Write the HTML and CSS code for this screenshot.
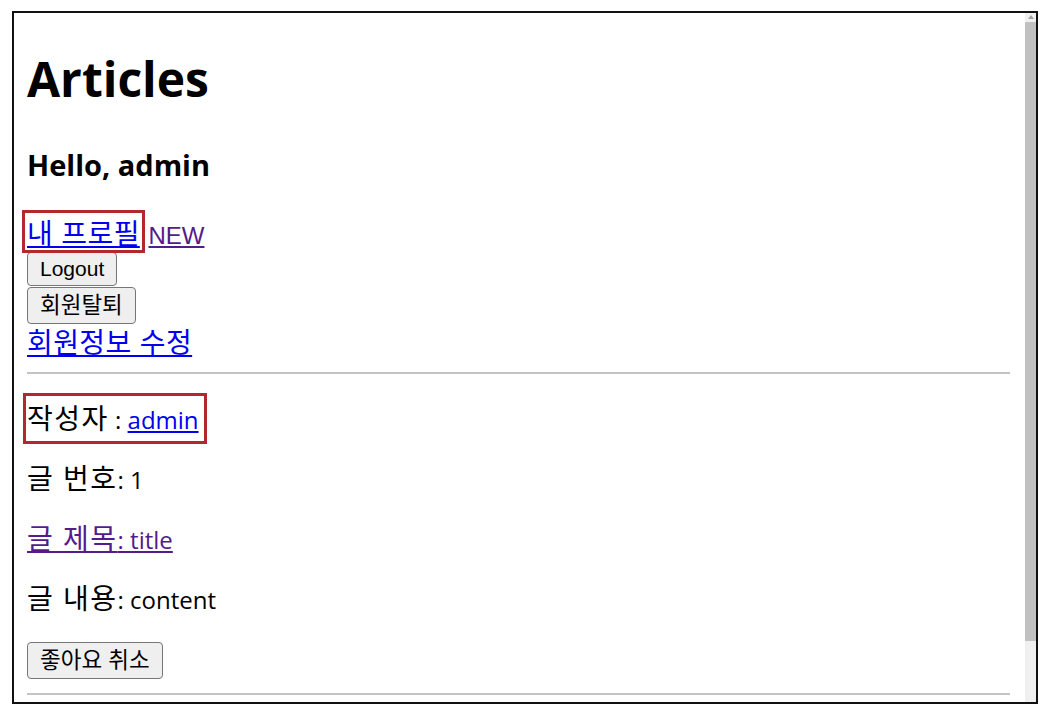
FILE: index.html
```html
<!DOCTYPE html>
<html lang="ko">
<head>
<meta charset="utf-8">
<title>Articles</title>
<link rel="stylesheet" href="styles.css">
</head>
<body>
<div class="frame">
  <div class="viewport">
    <div class="page">
      <h1 class="title">Articles</h1>
      <h3 class="greet">Hello, admin</h3>
      <div class="navline"><span class="mark mark-profile"><a class="link" href="#"><span class="ko">내 프로필</span></a></span> <a class="link visited link-new" href="#">NEW</a></div>
      <form class="form"><button type="button" class="btn btn-logout">Logout</button></form>
      <form class="form"><button type="button" class="btn btn-ko"><span class="ko">회원탈퇴</span></button></form>
      <div class="navline navline-edit"><a class="link" href="#"><span class="ko">회원정보 수정</span></a></div>
      <div class="rule rule-top"></div>
      <p class="line line-first"><span class="mark mark-author"><span class="ko">작성자</span> : <a class="link" href="#">admin</a></span></p>
      <p class="line"><span class="ko">글 번호</span>: 1</p>
      <p class="line"><a class="link visited" href="#"><span class="ko">글 제목</span>: title</a></p>
      <p class="line"><span class="ko">글 내용</span>: content</p>
      <form class="form"><button type="button" class="btn btn-ko btn-like"><span class="ko">좋아요 취소</span></button></form>
      <div class="rule rule-bottom"></div>
    </div>
  </div>
  <div class="scrollbar">
    <div class="scroll-arrow"></div>
    <div class="scroll-thumb"></div>
  </div>
</div>
</body>
</html>
```
FILE: styles.css
```css
html, body {
  margin: 0;
  padding: 0;
  background: #ffffff;
}
body {
  padding: 11px 0 0 12px;
  width: 1048px;
  height: 714px;
  box-sizing: border-box;
  overflow: hidden;
}
.frame {
  width: 1026px;
  height: 693px;
  box-sizing: border-box;
  border: 2px solid #111111;
  display: flex;
  overflow: hidden;
  background: #ffffff;
}
.viewport {
  flex: 1;
  overflow: hidden;
}
.page {
  padding: 0 15px 0 13px;
  font-family: "Open Sans", "Noto Sans CJK KR", sans-serif;
  font-size: 24px;
  color: #000000;
}
.ko {
  line-height: 16px;
}
.title {
  margin: 36px 0 0;
  font-size: 48px;
  line-height: 60px;
  font-weight: 700;
}
.greet {
  margin: 38px 0 0;
  font-size: 29px;
  line-height: 36px;
  font-weight: 700;
}
.navline {
  margin-top: 38px;
  font-family: "Liberation Sans", "Noto Sans CJK KR", sans-serif;
  font-size: 24px;
  line-height: 30px;
  height: 30px;
}
.navline .ko {
  font-size: 28px;
  letter-spacing: 0.4px;
}
.link-new {
  margin-left: 2px;
}
.navline-edit {
  margin-top: 6px;
}
.line .ko {
  font-size: 28px;
  letter-spacing: 1.5px;
}
.link {
  color: #0000ee;
  text-decoration: underline;
}
.link.visited {
  color: #551a8b;
}
.mark {
  position: relative;
}
.mark::after {
  content: "";
  position: absolute;
  border: 3px solid #b2282e;
  pointer-events: none;
}
.mark-profile::after {
  left: -5px;
  right: -5px;
  top: -12px;
  bottom: -4px;
}
.mark-author::after {
  left: -4px;
  right: -8px;
  top: -10px;
  bottom: -8px;
}
.form {
  margin: 0;
}
.btn {
  display: block;
  box-sizing: border-box;
  margin: 0;
  font-family: "Liberation Sans", "Noto Sans CJK KR", sans-serif;
  font-size: 21px;
  color: #000000;
  background: #efefef;
  border: 1.5px solid #767676;
  border-radius: 4px;
  padding: 0 12px;
}
.btn .ko {
  font-size: 22.5px;
}
.btn-logout {
  height: 34px;
  line-height: 30px;
  margin-top: 1px;
}
.btn-ko {
  height: 37px;
  line-height: 33px;
  margin-top: 1px;
}
.rule {
  height: 2px;
  background: #c4c4c4;
}
.rule-top {
  margin-top: 12px;
}
.rule-bottom {
  margin-top: 14px;
}
.line {
  margin: 24px 0 0;
  line-height: 36px;
  height: 36px;
}
.line-first {
  margin-top: 28px;
}
.btn-like {
  margin-top: 24px;
}
.scrollbar {
  width: 11px;
  background: #f0f0f0;
  display: flex;
  flex-direction: column;
}
.scroll-arrow {
  height: 9px;
  position: relative;
}
.scroll-arrow::before {
  content: "";
  position: absolute;
  left: 3px;
  top: 2px;
  border-left: 3px solid transparent;
  border-right: 3px solid transparent;
  border-bottom: 4px solid #a3a3a3;
}
.scroll-thumb {
  height: 619px;
  background: #c1c1c1;
}
```
